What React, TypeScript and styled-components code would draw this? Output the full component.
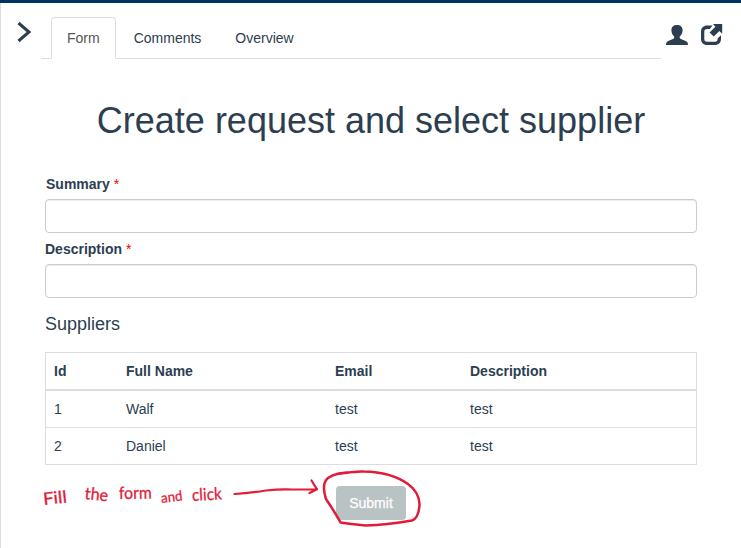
import React from 'react';
import styled, { createGlobalStyle } from 'styled-components';

const GlobalStyle = createGlobalStyle`
  * { box-sizing: border-box; }
  body {
    margin: 0;
    background: #fff;
    color: #2c3e50;
    font: 14px/20px "Liberation Sans", Arial, sans-serif;
    overflow: hidden;
  }
`;

const Page = styled.div`
  position: relative;
  width: 741px;
  height: 548px;
  border-top: 3px solid #003366;
`;

const Panel = styled.main`
  height: 545px;
  border-left: 1px solid #ddd;
`;

const Header = styled.header`
  display: flex;
  height: 56px;
  padding-left: 15px;
`;

const Toggle = styled.button`
  display: flex;
  align-items: flex-start;
  width: 25px;
  height: 56px;
  padding: 17px 0 0 0;
  border: 0;
  background: none;
  text-align: left;
  svg { display: block; }
`;

const Tabs = styled.nav`
  display: flex;
  align-items: flex-end;
  width: 620px;
  padding-left: 10px;
  border-bottom: 1px solid #ddd;
`;

const Tab = styled.a<{ $active?: boolean }>`
  height: 42px;
  margin: 0 2px -1px 0;
  padding: 10px 15px;
  border: 1px solid;
  border-color: ${p => (p.$active ? '#ddd #ddd #fff' : 'transparent')};
  border-radius: 4px 4px 0 0;
  background: ${p => (p.$active ? '#fff' : 'transparent')};
  color: ${p => (p.$active ? '#555' : '#2c3e50')};
`;

const Actions = styled.div`
  display: flex;
  gap: 13px;
  padding: 20px 0 0 5px;
  svg { display: block; }
`;

const Form = styled.form`
  width: 652px;
  margin-left: 44px;
`;

const Title = styled.h1`
  margin: 42px 0 33px;
  font-size: 36px;
  line-height: 40px;
  font-weight: 400;
  text-align: center;
  white-space: nowrap;
`;

const Field = styled.div`
  height: 65px;
`;

const Label = styled.label<{ $indent?: number }>`
  display: block;
  height: 25px;
  padding-left: ${p => p.$indent ?? 0}px;
  font-weight: 700;
`;

const Required = styled.span`
  color: #e00;
  font-weight: 400;
`;

const Input = styled.input`
  display: block;
  width: 100%;
  height: 34px;
  padding: 6px 12px;
  border: 1px solid #ccc;
  border-radius: 4px;
  background: #fff;
  box-shadow: inset 0 1px 1px rgba(0, 0, 0, 0.075);
`;

const SectionTitle = styled.h4`
  margin: 10px 0 18px;
  font-size: 18px;
  line-height: 20px;
  font-weight: 400;
`;

const Table = styled.div`
  height: 113px;
  border: 1px solid #ddd;
`;

const Row = styled.div<{ $head?: boolean }>`
  display: grid;
  grid-template-columns: 72px 209px 135px 1fr;
  height: ${p => (p.$head ? 38 : 37)}px;
  padding: 8px;
  border-bottom: ${p => (p.$head ? 2 : 1)}px solid #ddd;
  font-weight: ${p => (p.$head ? 700 : 400)};
  &:last-child { border-bottom: 0; }
`;

const Footer = styled.div`
  display: flex;
  justify-content: center;
  padding-top: 21px;
`;

const Submit = styled.button`
  width: 70px;
  height: 34px;
  border: 0;
  border-radius: 4px;
  background: #b9c3c4;
  color: #fff;
  font: inherit;
  -webkit-text-stroke: 0.25px #fff;
`;

const Ink = styled.div`
  position: absolute;
  inset: -3px 0 0 0;
  pointer-events: none;
  color: #e21b38;
`;

const InkLines = styled.svg`
  position: absolute;
  left: 0;
  top: 0;
`;

const InkWord = styled.span<{ $x: number; $y: number; $turn: number; $size: number; $stretch: number }>`
  position: absolute;
  left: ${p => p.$x}px;
  top: ${p => p.$y}px;
  transform: rotate(${p => p.$turn}deg) scaleX(${p => p.$stretch});
  transform-origin: 0 50%;
  font: 400 ${p => p.$size}px/20px Lato, sans-serif;
  -webkit-text-stroke: 0.3px #e21b38;
`;

const suppliers = [
  { id: 1, name: 'Walf', email: 'test', description: 'test' },
  { id: 2, name: 'Daniel', email: 'test', description: 'test' },
];

export default function App() {
  return (
    <Page>
      <GlobalStyle />
      <Panel>
        <Header>
          <Toggle type="button" aria-label="Expand">
            <svg width="17" height="24" viewBox="0 0 17 24" fill="none" stroke="#2c3e50" strokeWidth="3">
              <path d="M2.5 3 13 12 2.5 21" />
            </svg>
          </Toggle>
          <Tabs>
            <Tab $active>Form</Tab>
            <Tab>Comments</Tab>
            <Tab>Overview</Tab>
          </Tabs>
          <Actions>
            <svg width="22" height="24" viewBox="0 0 22 24" fill="#2c3e50">
              <path d="M11 2C7.5 2 5.4 4 5.4 7c0 2.8 1.1 5.1 2.8 6.4v1.7c-.7 1-2.4 1.5-4.8 2.3C1 18.3 0 19.2 0 22h22c0-2.8-1-3.7-3.5-4.6-2.4-.8-4.1-1.3-4.8-2.3v-1.7c1.8-1.3 2.9-3.6 2.9-6.4 0-3-2.1-5-5.6-5z" />
            </svg>
            <svg width="22" height="24" viewBox="0 0 22 24" fill="#2c3e50">
              <path d="M11.5 2.6H6.2C2.5 2.6 0 5 0 8.6V16c0 3.7 2.5 6 6.2 6h7.6c3.7 0 6.2-2.3 6.2-6v-3.8l-3.3 3.1c-.1 2.7-.9 3.4-2.6 3.4H6.1c-1.9 0-2.8-.9-2.8-2.7V8.8c0-2 .9-2.9 2.9-2.9h2.6z" />
              <path d="M12 1h9.2v9.7l-2.8-2.8-5.7 5.6-4.1-4.1 5.8-5.6z" />
            </svg>
          </Actions>
        </Header>
        <Form onSubmit={e => e.preventDefault()}>
          <Title>Create request and select supplier</Title>
          <Field>
            <Label htmlFor="summary" $indent={1}>Summary <Required>*</Required></Label>
            <Input id="summary" />
          </Field>
          <Field>
            <Label htmlFor="description">Description <Required>*</Required></Label>
            <Input id="description" />
          </Field>
          <SectionTitle>Suppliers</SectionTitle>
          <Table>
            <Row $head>
              <span>Id</span><span>Full Name</span><span>Email</span><span>Description</span>
            </Row>
            {suppliers.map(s => (
              <Row key={s.id}>
                <span>{s.id}</span><span>{s.name}</span><span>{s.email}</span><span>{s.description}</span>
              </Row>
            ))}
          </Table>
          <Footer><Submit type="submit">Submit</Submit></Footer>
        </Form>
      </Panel>
      <Ink>
        <InkWord $x={43} $y={489} $turn={-6} $size={17} $stretch={1.1}>Fill</InkWord>
        <InkWord $x={85} $y={483} $turn={6} $size={17} $stretch={0.95}>the</InkWord>
        <InkWord $x={119} $y={483} $turn={-1} $size={17} $stretch={0.92}>form</InkWord>
        <InkWord $x={161} $y={488} $turn={-7} $size={14} $stretch={0.95}>and</InkWord>
        <InkWord $x={192} $y={485} $turn={-3} $size={17} $stretch={0.9}>click</InkWord>
        <InkLines width="741" height="548" fill="none" stroke="#e21b38" strokeWidth="2.5" strokeLinecap="round" strokeLinejoin="round">
          <path d="M234.5 494 Q250 493 266 490.5 Q280 489 292 489.5 L316.5 489.3 M311.5 480.5 L317 489.3 L309.5 493" strokeWidth="2.2" />
          <path d="M337 474 Q356 471 364 471.5 Q391 472 408 484 Q419 492 419.5 504 Q419 518 412 520.5 Q386 525 366 525.5 Q350 524 340.5 522.5 Q336 514 326 499 Q321 484 328 478 Q336 472 356 472" />
        </InkLines>
      </Ink>
    </Page>
  );
}
